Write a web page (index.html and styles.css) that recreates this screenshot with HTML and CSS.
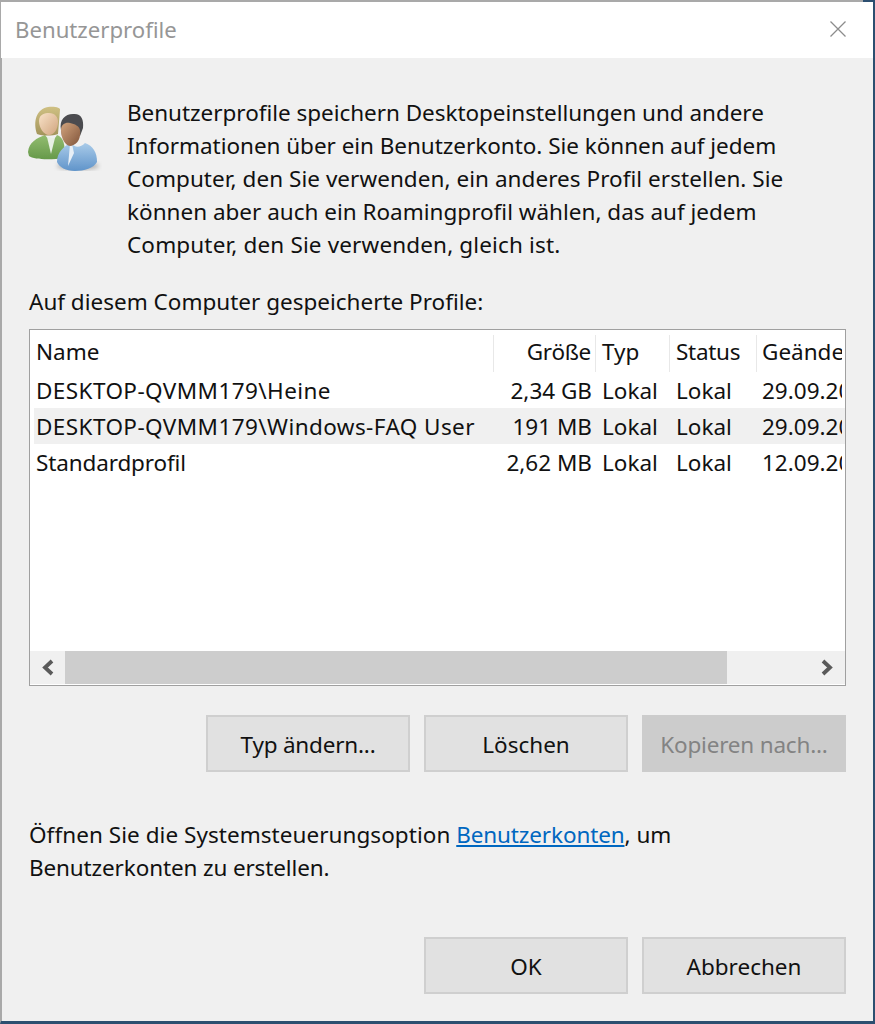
FILE: index.html
```html
<!DOCTYPE html>
<html lang="de">
<head>
<meta charset="utf-8">
<title>Benutzerprofile</title>
<link rel="stylesheet" href="styles.css">
</head>
<body>
<div class="window">
  <div class="topedge"></div>
  <header class="titlebar">
    <span class="title">Benutzerprofile</span>
    <svg class="close" width="18" height="18" viewBox="0 0 18 18"><path d="M1.500 1.500 16.500 16.500M16.500 1.500 1.500 16.500" stroke="#8c8c8c" stroke-width="1.300" fill="none"/></svg>
  </header>
  <main class="content">
    <section class="intro">
      <svg class="usericon" width="74" height="74" viewBox="0 0 74 74">
        <defs>
          <linearGradient id="skinA" x1="0" y1="0" x2="1" y2="1"><stop offset="0" stop-color="#f8e2c8"/><stop offset="1" stop-color="#d0a47e"/></linearGradient>
          <linearGradient id="skinB" x1="0" y1="0" x2="1" y2="1"><stop offset="0" stop-color="#d2a47e"/><stop offset="1" stop-color="#80543a"/></linearGradient>
          <linearGradient id="green" x1="0" y1="0" x2="0" y2="1"><stop offset="0" stop-color="#93bd70"/><stop offset="1" stop-color="#66994a"/></linearGradient>
          <linearGradient id="blue" x1="0" y1="0" x2="0" y2="1"><stop offset="0" stop-color="#a9cbe9"/><stop offset="1" stop-color="#6094ca"/></linearGradient>
          <linearGradient id="hair" x1="0" y1="0" x2="0" y2="1"><stop offset="0" stop-color="#cfc083"/><stop offset="1" stop-color="#a2945a"/></linearGradient>
          <filter id="soft"><feGaussianBlur stdDeviation="0.700"/></filter>
          <filter id="shade"><feGaussianBlur stdDeviation="2"/></filter>
        </defs>
        <ellipse cx="50" cy="66" rx="21" ry="4" fill="#777" opacity="0.500" filter="url(#shade)"/>
        <g filter="url(#soft)">
          <path d="M0 52C1 42 9 38 17 35 21 41 26 41 29 35 35 37 38 44 36 58 24 60 6 60 1 56Z" fill="url(#green)"/>
          <path d="M19 37 23 54 27 38Z" fill="#e8f0e4"/>
          <path d="M9 34C5 22 8 9 20 7 27 6 33 8 32 10L30 34C24 36 15 36 9 34Z" fill="url(#hair)"/>
          <path d="M11 21C11 14 17 13 21 13 27 13 30 17 30 22 30 29 26 35 21 35 16 35 11 28 11 21Z" fill="url(#skinA)"/>
          <path d="M29 62C29 52 36 46 43 43 47 48 52 48 57 43 65 46 69 52 69 62 66 68 56 71 47 71 38 71 31 67 29 62Z" fill="url(#blue)"/>
          <path d="M42 44 40 66 46 53 44 44Z" fill="#e8eff6"/>
          <path d="M33 30C31 20 37 14 45 14 53 13 56 19 55 28L52 36 34 36Z" fill="#4b4c4f"/>
          <path d="M33 30C33 24 38 22 42 23 47 24 51 26 52 30 53 38 50 44 43 46 37 46 33 38 33 30Z" fill="url(#skinB)"/>
        </g>
      </svg>
      <p class="intro-text"><span class="l1">Benutzerprofile speichern Desktopeinstellungen und andere</span><br><span class="l1">Informationen über ein Benutzerkonto. Sie können auf jedem</span><br><span class="l3">Computer, den Sie verwenden, ein anderes Profil erstellen. Sie</span><br>können aber auch ein Roamingprofil wählen, das auf jedem<br><span class="l5">Computer, den Sie verwenden, gleich ist.</span></p>
    </section>
    <p class="list-label">Auf diesem Computer gespeicherte Profile:</p>
    <section class="listbox">
      <div class="rows">
        <div class="row head">
          <span class="cell name sep">Name</span><span class="cell size sep"><span class="narrow">Größe</span></span><span class="cell typ sep">Typ</span><span class="cell status sep"><span class="narrow">Status</span></span><span class="cell date">Geänderte</span>
        </div>
        <div class="row">
          <span class="cell name"><span class="caps">DESKTOP-QVMM179\Heine</span></span><span class="cell size">2,34 GB</span><span class="cell typ">Lokal</span><span class="cell status">Lokal</span><span class="cell date">29.09.2020</span>
        </div>
        <div class="row selected">
          <span class="cell name"><span class="caps">DESKTOP-QVMM179\Windows-FAQ User</span></span><span class="cell size">191 MB</span><span class="cell typ">Lokal</span><span class="cell status">Lokal</span><span class="cell date">29.09.2020</span>
        </div>
        <div class="row">
          <span class="cell name tight">Standardprofil</span><span class="cell size">2,62 MB</span><span class="cell typ">Lokal</span><span class="cell status">Lokal</span><span class="cell date">12.09.2020</span>
        </div>
      </div>
      <div class="scrollbar">
        <div class="arrow"><svg width="15" height="17" viewBox="0 0 15 17"><path d="M12 2 5 8.500l7 6.500" fill="none" stroke="#5a5a5a" stroke-width="3.800"/></svg></div>
        <div class="track"><div class="thumb"></div></div>
        <div class="arrow"><svg width="15" height="17" viewBox="0 0 15 17"><path d="M3 2l7 6.500-7 6.500" fill="none" stroke="#5a5a5a" stroke-width="3.800"/></svg></div>
      </div>
    </section>
    <div class="actions">
      <button class="btn tightbtn">Typ ändern...</button>
      <button class="btn">Löschen</button>
      <button class="btn tightbtn disabled">Kopieren nach...</button>
    </div>
    <p class="hint"><span class="l6">Öffnen Sie die Systemsteuerungsoption</span> <a class="tight" href="#">Benutzerkonten</a>, um<br><span class="tight">Benutzerkonten zu erstellen.</span></p>
    <div class="actions footer">
      <button class="btn">OK</button>
      <button class="btn">Abbrechen</button>
    </div>
  </main>
</div>
</body>
</html>
```
FILE: styles.css
```css
* { box-sizing: border-box; }
html, body { margin: 0; padding: 0; }
body {
  width: 875px;
  height: 1024px;
  overflow: hidden;
  font-family: "Noto Sans", "Open Sans", sans-serif;
  font-size: 22.5px;
  color: #111;
}
.window {
  width: 875px;
  height: 1024px;
  display: flex;
  flex-direction: column;
  background: #f0f0f0;
  border-left: 1px solid #a9a9a9;
  border-right: 2px solid #2c4f70;
  border-bottom: 3px solid #2c4f70;
}
.topedge {
  height: 2px;
  flex: none;
  background: linear-gradient(to right, #a9a9a9 862px, #2c4f70 862px);
}
.titlebar {
  height: 56px;
  flex: none;
  background: #fff;
  display: flex;
  align-items: center;
  justify-content: space-between;
  padding: 0 26px 2px 14px;
}
.title { color: #969696; font-size: 22.2px; }
.close { display: block; }
.content {
  flex: 1;
  border-left: 1px solid #a9a9a9;
  padding: 0 27px;
  display: flex;
  flex-direction: column;
}
.intro { display: flex; height: 227px; }
.usericon { flex: none; margin: 42px 25px 0 -1px; }
.intro-text { margin: 38px 0 0; line-height: 33px; white-space: nowrap; }
.l1 { letter-spacing: -0.035px; }
.l3 { letter-spacing: 0.05px; }
.l5 { letter-spacing: 0.15px; }
.l6 { letter-spacing: 0.05px; }
.list-label { margin: 0; height: 44px; line-height: 33px; }
.listbox {
  width: 817px;
  height: 357px;
  flex: none;
  background: #fff;
  border: 1px solid #a0a0a0;
  display: flex;
  flex-direction: column;
}
.rows { flex: 1; padding-top: 5px; overflow: hidden; }
.row { display: flex; height: 36px; align-items: center; margin-left: 4px; padding-top: 2px; white-space: nowrap; line-height: 34px; }
.row.head { height: 37px; padding-top: 0; }
.row.selected { background: #f0f0f0; }
.cell { display: block; flex: none; padding-left: 1px; overflow: hidden; }
.caps { letter-spacing: 0.42px; }
.tight { letter-spacing: -0.13px; }
.narrow { letter-spacing: -0.3px; }
.name { width: 460px; padding-left: 2px; }
.size { width: 102px; text-align: right; padding-right: 4px; }
.typ { width: 74px; padding-left: 6px; }
.status { width: 87px; padding-left: 6px; }
.date { width: 85px; padding-left: 5px; }
.sep { border-right: 1px solid #e8e8e8; }
.head .cell { height: 37px; line-height: 34px; }
.scrollbar { height: 33px; flex: none; display: flex; background: #f0f0f0; margin-bottom: 1px; }
.arrow { width: 35px; flex: none; display: flex; align-items: center; justify-content: center; }
.track { flex: 1; display: block; }
.thumb { width: 662px; height: 100%; background: #cdcdcd; }
.actions { display: flex; justify-content: flex-end; gap: 14px; margin-top: 29px; flex: none; }
.btn {
  width: 204px;
  height: 57px;
  background: #e1e1e1;
  border: 2px solid #cfcfcf;
  font: inherit;
  color: #111;
  padding: 2px 0 0;
}
.tightbtn { letter-spacing: -0.2px; }
.btn.disabled { background: #cccccc; border-color: #cccccc; color: #838383; }
.hint { margin: 46px 0 0; line-height: 33px; white-space: nowrap; height: 67px; }
.hint a { color: #0067c0; text-decoration: underline; }
.footer { margin-top: 52px; }
```
